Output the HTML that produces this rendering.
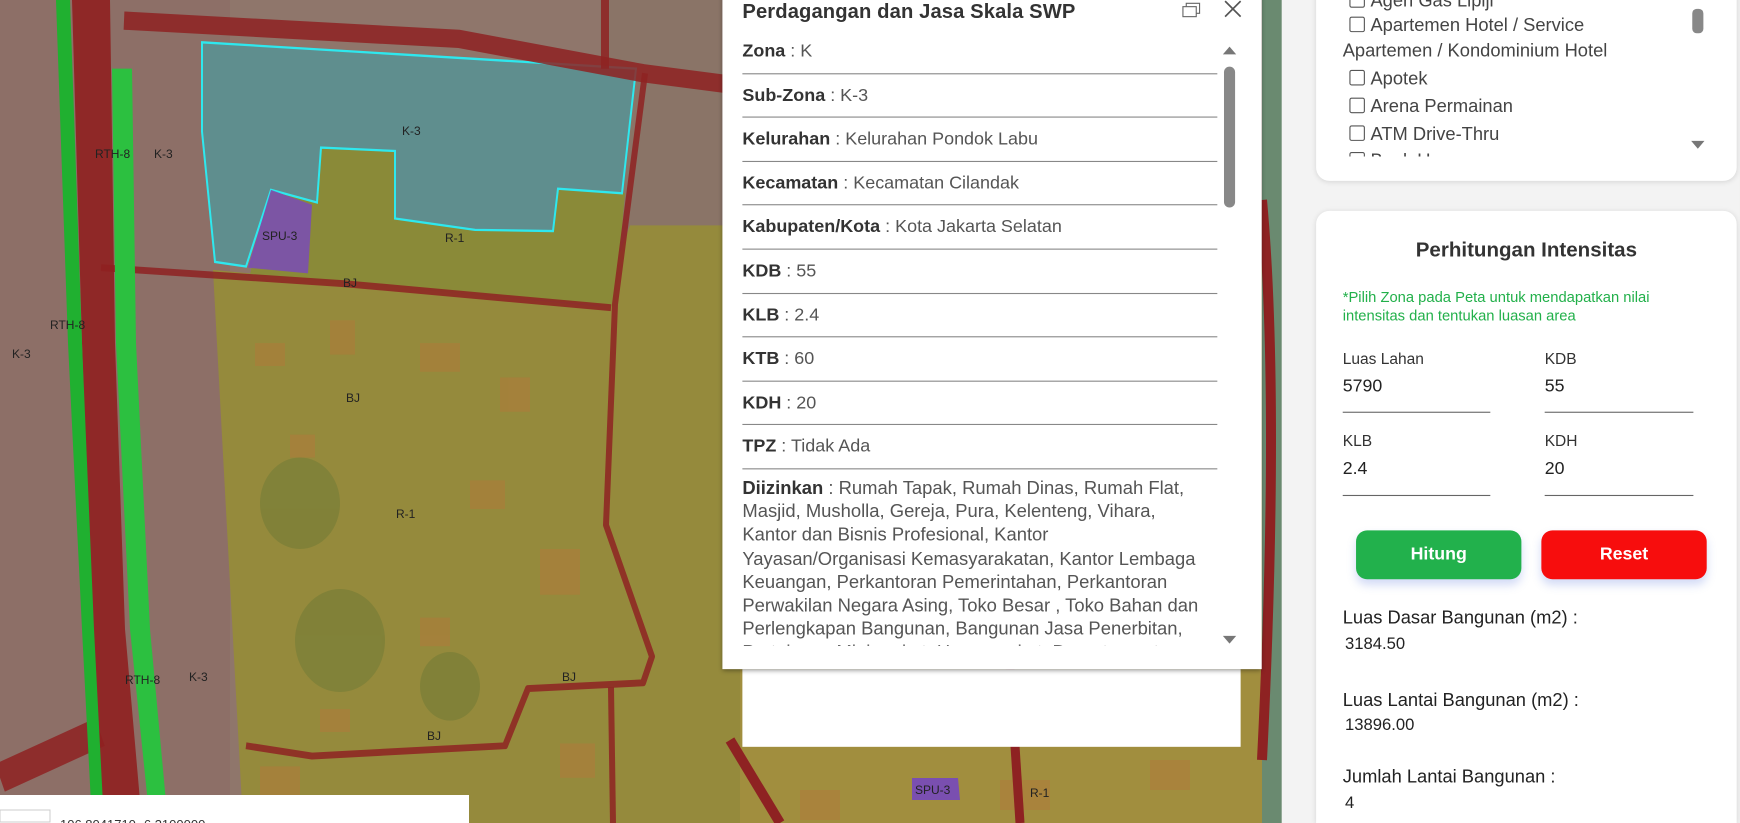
<!DOCTYPE html>
<html><head><meta charset="utf-8">
<style>
html,body{margin:0;padding:0;width:1740px;height:823px;overflow:hidden;background:#8e7a6c;font-family:"Liberation Sans",sans-serif}
#wrap{position:relative;width:1740px;height:823px;overflow:hidden;contain:paint;clip-path:inset(0)}
#map{position:absolute;left:0;top:0}
#ui{position:absolute;left:0;top:0;width:1568px;height:742px;transform:scale(1.10969);transform-origin:0 0;overflow:hidden}
.pop{position:absolute;left:651px;top:-10px;width:486px;height:613px;background:#fff;box-shadow:0 1px 4px rgba(0,0,0,.4)}
.under{position:absolute;left:669px;top:603px;width:449px;height:70px;background:#fff}
.title{position:absolute;left:18px;top:10px;font-size:18.2px;font-weight:bold;color:#333;letter-spacing:.1px}
.row{position:absolute;left:18px;width:428px;font-size:16.2px;color:#555;border-bottom:1px solid #888;height:39.6px;line-height:39px;box-sizing:border-box}
.row b{color:#333}
.diz{position:absolute;left:18px;top:439px;width:440px;height:153px;overflow:hidden;font-size:16.6px;line-height:21.2px;color:#555;white-space:nowrap}
.diz b{color:#333}
.side{position:absolute;left:1155px;top:0;width:413px;height:742px;background:#f3f3f3}
.card{position:absolute;background:#fff;border-radius:12px;box-shadow:0 1px 5px rgba(0,0,0,.12)}
.ck{position:absolute;font-size:16.5px;color:#444;white-space:nowrap}
.ck i{display:inline-block;width:12px;height:12px;border:1px solid #555;border-radius:2px;margin-right:5px;vertical-align:-1px}
.lbl{position:absolute;font-size:14px;color:#333}
.val{position:absolute;font-size:16px;color:#222}
.ul{position:absolute;height:1px;background:#666}
.btn{position:absolute;top:478px;width:149px;height:44px;border-radius:10px;color:#fff;font-weight:bold;font-size:16px;text-align:center;line-height:43px;box-shadow:0 5px 8px rgba(80,110,220,.25)}
.res{position:absolute;left:1210px;font-size:16.5px;color:#222}
</style></head><body><div id="wrap">
<svg id="map" width="1740" height="823" viewBox="0 0 1740 823">
<rect width="1740" height="823" fill="#8f766b"/>
<g transform="scale(1,1.1438)">
<rect x="0" y="0" width="230" height="720" fill="#8d6f67"/>
<rect x="600" y="0" width="200" height="200" fill="#8a7467"/>
<polygon points="213,236 600,268 630,197 1300,197 1300,720 243,720" fill="#958a3c"/>
<polygon points="271,166 321,129 395,132 395,191 553,202 558,165 625,169 615,268 250,240" fill="#8a8a38"/>
<g fill="#b07a3a" opacity=".55">
<rect x="255" y="300" width="30" height="20"/><rect x="330" y="280" width="25" height="30"/><rect x="420" y="300" width="40" height="25"/><rect x="500" y="330" width="30" height="30"/>
<rect x="290" y="380" width="25" height="20"/><rect x="470" y="420" width="35" height="25"/><rect x="540" y="480" width="40" height="40"/><rect x="420" y="540" width="30" height="25"/>
<rect x="320" y="620" width="30" height="20"/><rect x="260" y="670" width="40" height="30"/><rect x="560" y="650" width="35" height="30"/>
</g>
<g fill="#6e7a35" opacity=".5">
<circle cx="300" cy="440" r="40"/><circle cx="340" cy="560" r="45"/><circle cx="450" cy="600" r="30"/>
</g>
<polygon points="202,37 636,60 622,169 558,165 553,202 475,201 395,191 395,132 321,129 317,177 271,166 246,233 215,229 202,115" fill="#5f8e8e" stroke="#2ee8ee" stroke-width="2"/>
<polygon points="271,166 312,179 308,239 248,234" fill="#7a4fb0" opacity=".9"/>
<g fill="none" stroke="#8e2222" stroke-opacity=".85" stroke-linejoin="round">
<polyline points="124,18 459,34 643,64 740,75" stroke-width="16"/>
<polyline points="605,0 605,60" stroke-width="8"/>
<polyline points="101,234 344,248 611,269" stroke-width="6"/>
<polyline points="645,64 615,266 606,459 652,574 643,597 528,602 505,652 312,661 246,652" stroke-width="6"/>
<polyline points="611,601 613,720" stroke-width="6"/>
<polyline points="0,680 50,660 100,640" stroke-width="26"/>
</g>
<polygon points="72,0 110,0 115,300 125,550 142,720 100,720 92,550 82,300" fill="#8f2020" opacity=".9"/>
<polygon points="56,0 70,0 82,300 94,550 104,720 92,720 82,550 68,300" fill="#20b030"/>
<polygon points="112,60 132,60 136,300 150,550 168,720 150,720 130,550 116,300" fill="#2cc040"/>
</g>
<rect x="740" y="669" width="542" height="154" fill="#a18e3e"/>
<g fill="#b07a3a" opacity=".55"><rect x="1000" y="780" width="50" height="30"/><rect x="1150" y="760" width="40" height="30"/><rect x="800" y="790" width="40" height="30"/></g>
<polyline points="730,740 780,823" stroke="#8e2222" stroke-width="10" fill="none"/>
<polyline points="1010,669 1020,823" stroke="#8e2222" stroke-width="9" fill="none"/>
<polygon points="912,778 958,778 960,800 912,800" fill="#7a4fb0"/>
<rect x="1262" y="0" width="20" height="823" fill="#6a8a70"/>
<path d="M1262 200 Q1280 400 1262 760" stroke="#8e2222" stroke-width="10" fill="none"/>
<g font-size="12" fill="#222" font-family="Liberation Sans">
<text x="95" y="158">RTH-8</text><text x="154" y="158">K-3</text><text x="50" y="329">RTH-8</text><text x="12" y="358">K-3</text>
<text x="402" y="135">K-3</text><text x="262" y="240">SPU-3</text><text x="445" y="242">R-1</text><text x="343" y="287">BJ</text>
<text x="346" y="402">BJ</text><text x="396" y="518">R-1</text><text x="125" y="684">RTH-8</text><text x="189" y="681">K-3</text>
<text x="562" y="681">BJ</text><text x="427" y="740">BJ</text><text x="915" y="794">SPU-3</text><text x="1030" y="797">R-1</text>
</g>
<rect x="0" y="795" width="469" height="28" fill="#fff"/>
<rect x="0" y="810" width="50" height="12" fill="#fff" stroke="#ccc"/>
<text x="60" y="829" font-size="13" fill="#333">106.8041710 -6.3100000</text>
</svg>
<div id="ui">
<div class="under"></div>
<div class="pop">
<div class="title">Perdagangan dan Jasa Skala SWP</div>
<svg style="position:absolute;left:413px;top:10px" width="20" height="18"><rect x="2" y="6" width="12" height="9" fill="none" stroke="#666"/><path d="M5 6V3h12v9h-3" fill="none" stroke="#666"/></svg>
<svg style="position:absolute;left:451px;top:9px" width="18" height="18"><path d="M2 2L16 16M16 2L2 16" stroke="#555" stroke-width="1.5"/></svg>
<div class="row" style="top:37px"><b>Zona</b> : K</div>
<div class="row" style="top:76.6px"><b>Sub-Zona</b> : K-3</div>
<div class="row" style="top:116.2px"><b>Kelurahan</b> : Kelurahan Pondok Labu</div>
<div class="row" style="top:155.8px"><b>Kecamatan</b> : Kecamatan Cilandak</div>
<div class="row" style="top:195.4px"><b>Kabupaten/Kota</b> : Kota Jakarta Selatan</div>
<div class="row" style="top:235px"><b>KDB</b> : 55</div>
<div class="row" style="top:274.6px"><b>KLB</b> : 2.4</div>
<div class="row" style="top:314.2px"><b>KTB</b> : 60</div>
<div class="row" style="top:353.8px"><b>KDH</b> : 20</div>
<div class="row" style="top:393.4px"><b>TPZ</b> : Tidak Ada</div>
<div class="diz"><b>Diizinkan</b> : Rumah Tapak, Rumah Dinas, Rumah Flat,<br>Masjid, Musholla, Gereja, Pura, Kelenteng, Vihara,<br>Kantor dan Bisnis Profesional, Kantor<br>Yayasan/Organisasi Kemasyarakatan, Kantor Lembaga<br>Keuangan, Perkantoran Pemerintahan, Perkantoran<br>Perwakilan Negara Asing, Toko Besar , Toko Bahan dan<br>Perlengkapan Bangunan, Bangunan Jasa Penerbitan,<br>Pertokoan, Minimarket, Hypermarket, Departement</div>
<svg style="position:absolute;left:450px;top:50px" width="14" height="10"><path d="M1 9L7 2L13 9Z" fill="#777"/></svg>
<div style="position:absolute;left:452px;top:70px;width:10px;height:127px;background:#888;border-radius:5px"></div>
<svg style="position:absolute;left:450px;top:582px" width="14" height="10"><path d="M1 1L7 8L13 1Z" fill="#777"/></svg>
</div>
<div class="side">
<div class="card" style="left:31px;top:-20px;width:379px;height:183px">
<div style="position:absolute;left:0;top:20px;width:379px;height:141px;overflow:hidden">
<div class="ck" style="left:30px;top:-8px"><i></i>Agen Gas Lipiji</div>
<div class="ck" style="left:30px;top:14px"><i></i>Apartemen Hotel / Service</div>
<div class="ck" style="left:24px;top:37px">Apartemen / Kondominium Hotel</div>
<div class="ck" style="left:30px;top:62px"><i></i>Apotek</div>
<div class="ck" style="left:30px;top:87px"><i></i>Arena Permainan</div>
<div class="ck" style="left:30px;top:112px"><i></i>ATM Drive-Thru</div>
<div class="ck" style="left:30px;top:136px"><i></i>Bank Umum</div>
</div>
<div style="position:absolute;left:339px;top:28px;width:10px;height:22px;background:#888;border-radius:4px"></div>
<svg style="position:absolute;left:337px;top:146px" width="14" height="9"><path d="M1 1L7 8L13 1Z" fill="#777"/></svg>
</div>
<div class="card" style="left:31px;top:190px;width:379px;height:552px;border-radius:12px 12px 0 0"></div>
</div>
<div style="position:absolute;left:1186px;top:214px;width:379px;text-align:center;font-size:18.5px;font-weight:bold;color:#333">Perhitungan Intensitas</div>
<div style="position:absolute;left:1210px;top:259px;width:325px;font-size:13.3px;line-height:17px;color:#22b04a">*Pilih Zona pada Peta untuk mendapatkan nilai intensitas dan tentukan luasan area</div>
<div class="lbl" style="left:1210px;top:315px">Luas Lahan</div><div class="lbl" style="left:1392px;top:315px">KDB</div>
<div class="val" style="left:1210px;top:340px">5790</div><div class="val" style="left:1392px;top:340px">55</div>
<div class="ul" style="left:1210px;top:371px;width:133px"></div><div class="ul" style="left:1392px;top:371px;width:134px"></div>
<div class="lbl" style="left:1210px;top:389px">KLB</div><div class="lbl" style="left:1392px;top:389px">KDH</div>
<div class="val" style="left:1210px;top:414px">2.4</div><div class="val" style="left:1392px;top:414px">20</div>
<div class="ul" style="left:1210px;top:446px;width:133px"></div><div class="ul" style="left:1392px;top:446px;width:134px"></div>
<div class="btn" style="left:1222px;background:#22b14c">Hitung</div>
<div class="btn" style="left:1389px;background:#f70d0d">Reset</div>
<div class="res" style="top:548px">Luas Dasar Bangunan (m2) :</div><div class="res" style="top:572px;left:1212px;font-size:15px">3184.50</div>
<div class="res" style="top:622px">Luas Lantai Bangunan (m2) :</div><div class="res" style="top:645px;left:1212px;font-size:15px">13896.00</div>
<div class="res" style="top:691px">Jumlah Lantai Bangunan :</div><div class="res" style="top:715px;left:1212px;font-size:15px">4</div>
</div>
</div></body></html>
